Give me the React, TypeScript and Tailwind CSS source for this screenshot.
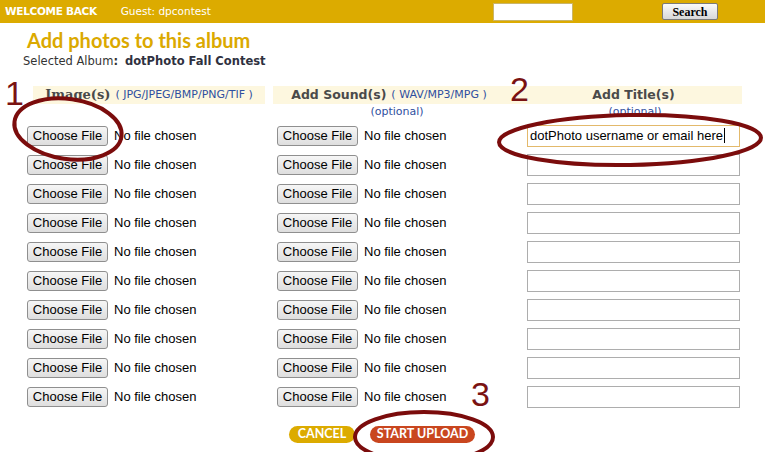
import React from "react";

const rows = Array.from({ length: 10 }, (_, i) => i);

function FileField() {
    return (
        <div className="flex items-center h-[29px]">
            <span className="inline-flex items-center justify-center w-[81px] h-[20px] rounded-[3px] border border-[#8f8f8f] bg-gradient-to-b from-[#f6f6f6] to-[#dedede] text-[13px] text-black font-['Liberation_Sans',Arial,sans-serif]">
                Choose File
            </span>
            <span className="ml-[6px] text-[13px] text-black font-['Liberation_Sans',Arial,sans-serif]">
                No file chosen
            </span>
        </div>
    );
}

export default function App() {
    return (
        <div className="relative w-[765px] h-[452px] bg-white overflow-hidden font-['DejaVu_Sans',Verdana,sans-serif]">
            {/* top bar */}
            <div className="flex items-center h-[23px] bg-[#dcab00] text-white">
                <span className="ml-[5px] text-[10.5px] font-bold tracking-[-0.3px]">WELCOME BACK</span>
                <span className="ml-[24px] text-[10.5px]">Guest: dpcontest</span>
                <div className="ml-auto mr-[47px] flex items-center">
                    <div className="w-[80px] h-[18px] bg-white border border-[#c9b56a]"></div>
                    <span className="ml-[89px] inline-flex items-center justify-center w-[56px] h-[17px] rounded-[2px] border border-[#7a7a7a] bg-gradient-to-b from-[#fafafa] to-[#d8d8d8] text-black text-[12px] font-bold font-['Liberation_Serif','Times_New_Roman',serif]">
                        Search
                    </span>
                </div>
            </div>

            {/* title */}
            <div className="pl-[27px] pt-[5px]">
                <h1 className="text-[20px] leading-[24px] font-bold text-[#dba900] font-['Lato',sans-serif]">
                    Add photos to this album
                </h1>
            </div>
            <div className="pl-[23px] mt-[2px] text-[11.5px] leading-[14px] text-[#333]">
                Selected Album<span className="font-bold">:</span>
                <span className="ml-[7px] font-bold text-[#2f3140]">dotPhoto Fall Contest</span>
            </div>

            {/* upload table */}
            <div className="ml-[27px] mt-[18px] grid grid-cols-[246px_232px_240px]">
                <div className="ml-[6px] mr-[8px] h-[18px] bg-[#fdf7df] flex items-center justify-center">
                    <span className="text-[13px] font-bold text-[#4a4a4a] font-['DejaVu_Serif',Georgia,serif]">Image(s)</span>
                    <span className="ml-[5px] text-[11px] text-[#2f4fa0]">( JPG/JPEG/BMP/PNG/TIF )</span>
                </div>
                <div className="h-[18px] bg-[#fdf7df] flex items-center justify-center">
                    <span className="text-[12.5px] font-bold text-[#4a4a4a]">Add Sound(s)</span>
                    <span className="ml-[5px] text-[11px] text-[#2f4fa0]">( WAV/MP3/MPG )</span>
                </div>
                <div className="mr-[3px] h-[18px] bg-[#fdf7df] flex items-center justify-center pl-[20px]">
                    <span className="text-[12.5px] font-bold text-[#4a4a4a]">Add Title(s)</span>
                </div>

                <div></div>
                <div className="text-center text-[11px] leading-[16px] text-[#2f4fa0] pl-[16px]">(optional)</div>
                <div className="text-center text-[11px] leading-[16px] text-[#2f4fa0] pl-[20px]">(optional)</div>

                <div className="col-span-3 mt-[1px]">
                    {rows.map((i) => (
                        <div key={i} className="grid grid-cols-[250px_250px_213px]">
                            <FileField />
                            <FileField />
                            <div className="flex items-center h-[29px]">
                                {i === 0 ? (
                                    <div className="w-[213px] h-[22px] border border-[#e3b96b] flex items-center px-[2px] text-[13px] text-black font-['Liberation_Sans',Arial,sans-serif]">
                                        dotPhoto username or email here
                                        <span className="inline-block w-[1px] h-[15px] bg-black ml-[1px]"></span>
                                    </div>
                                ) : (
                                    <div className="w-[213px] h-[22px] border border-[#adadad]"></div>
                                )}
                            </div>
                        </div>
                    ))}
                </div>
            </div>

            {/* actions */}
            <div className="mt-[15px] ml-[289px] flex items-center gap-[15px]">
                <span className="inline-flex items-center justify-center w-[66px] h-[17px] rounded-full bg-[#dcab00] text-white text-[12.5px] font-bold font-['Lato',sans-serif]">
                    CANCEL
                </span>
                <span className="inline-flex items-center justify-center w-[105px] h-[17px] rounded-full bg-[#c9461f] text-white text-[12.5px] font-bold font-['Lato',sans-serif]">
                    START UPLOAD
                </span>
            </div>

            {/* red annotations */}
            <span className="absolute left-[5px] top-[76px] text-[34px] leading-[34px] text-[#7a1212] font-['Liberation_Sans',Arial,sans-serif]">1</span>
            <span className="absolute left-[510px] top-[72px] text-[34px] leading-[34px] text-[#7a1212] font-['Liberation_Sans',Arial,sans-serif]">2</span>
            <span className="absolute left-[471px] top-[377px] text-[34px] leading-[34px] text-[#7a1212] font-['Liberation_Sans',Arial,sans-serif]">3</span>
            <svg className="absolute left-0 top-0 pointer-events-none" width="765" height="452" viewBox="0 0 765 452">
                <ellipse cx="68" cy="129" rx="54" ry="30" transform="rotate(8 68 129)" fill="none" stroke="#7b0c0c" strokeWidth="4" />
                <ellipse cx="630" cy="140" rx="131" ry="25" transform="rotate(-1 630 140)" fill="none" stroke="#7b0c0c" strokeWidth="4" />
                <ellipse cx="424" cy="437" rx="69" ry="25" fill="none" stroke="#7b0c0c" strokeWidth="4" />
            </svg>
        </div>
    );
}
